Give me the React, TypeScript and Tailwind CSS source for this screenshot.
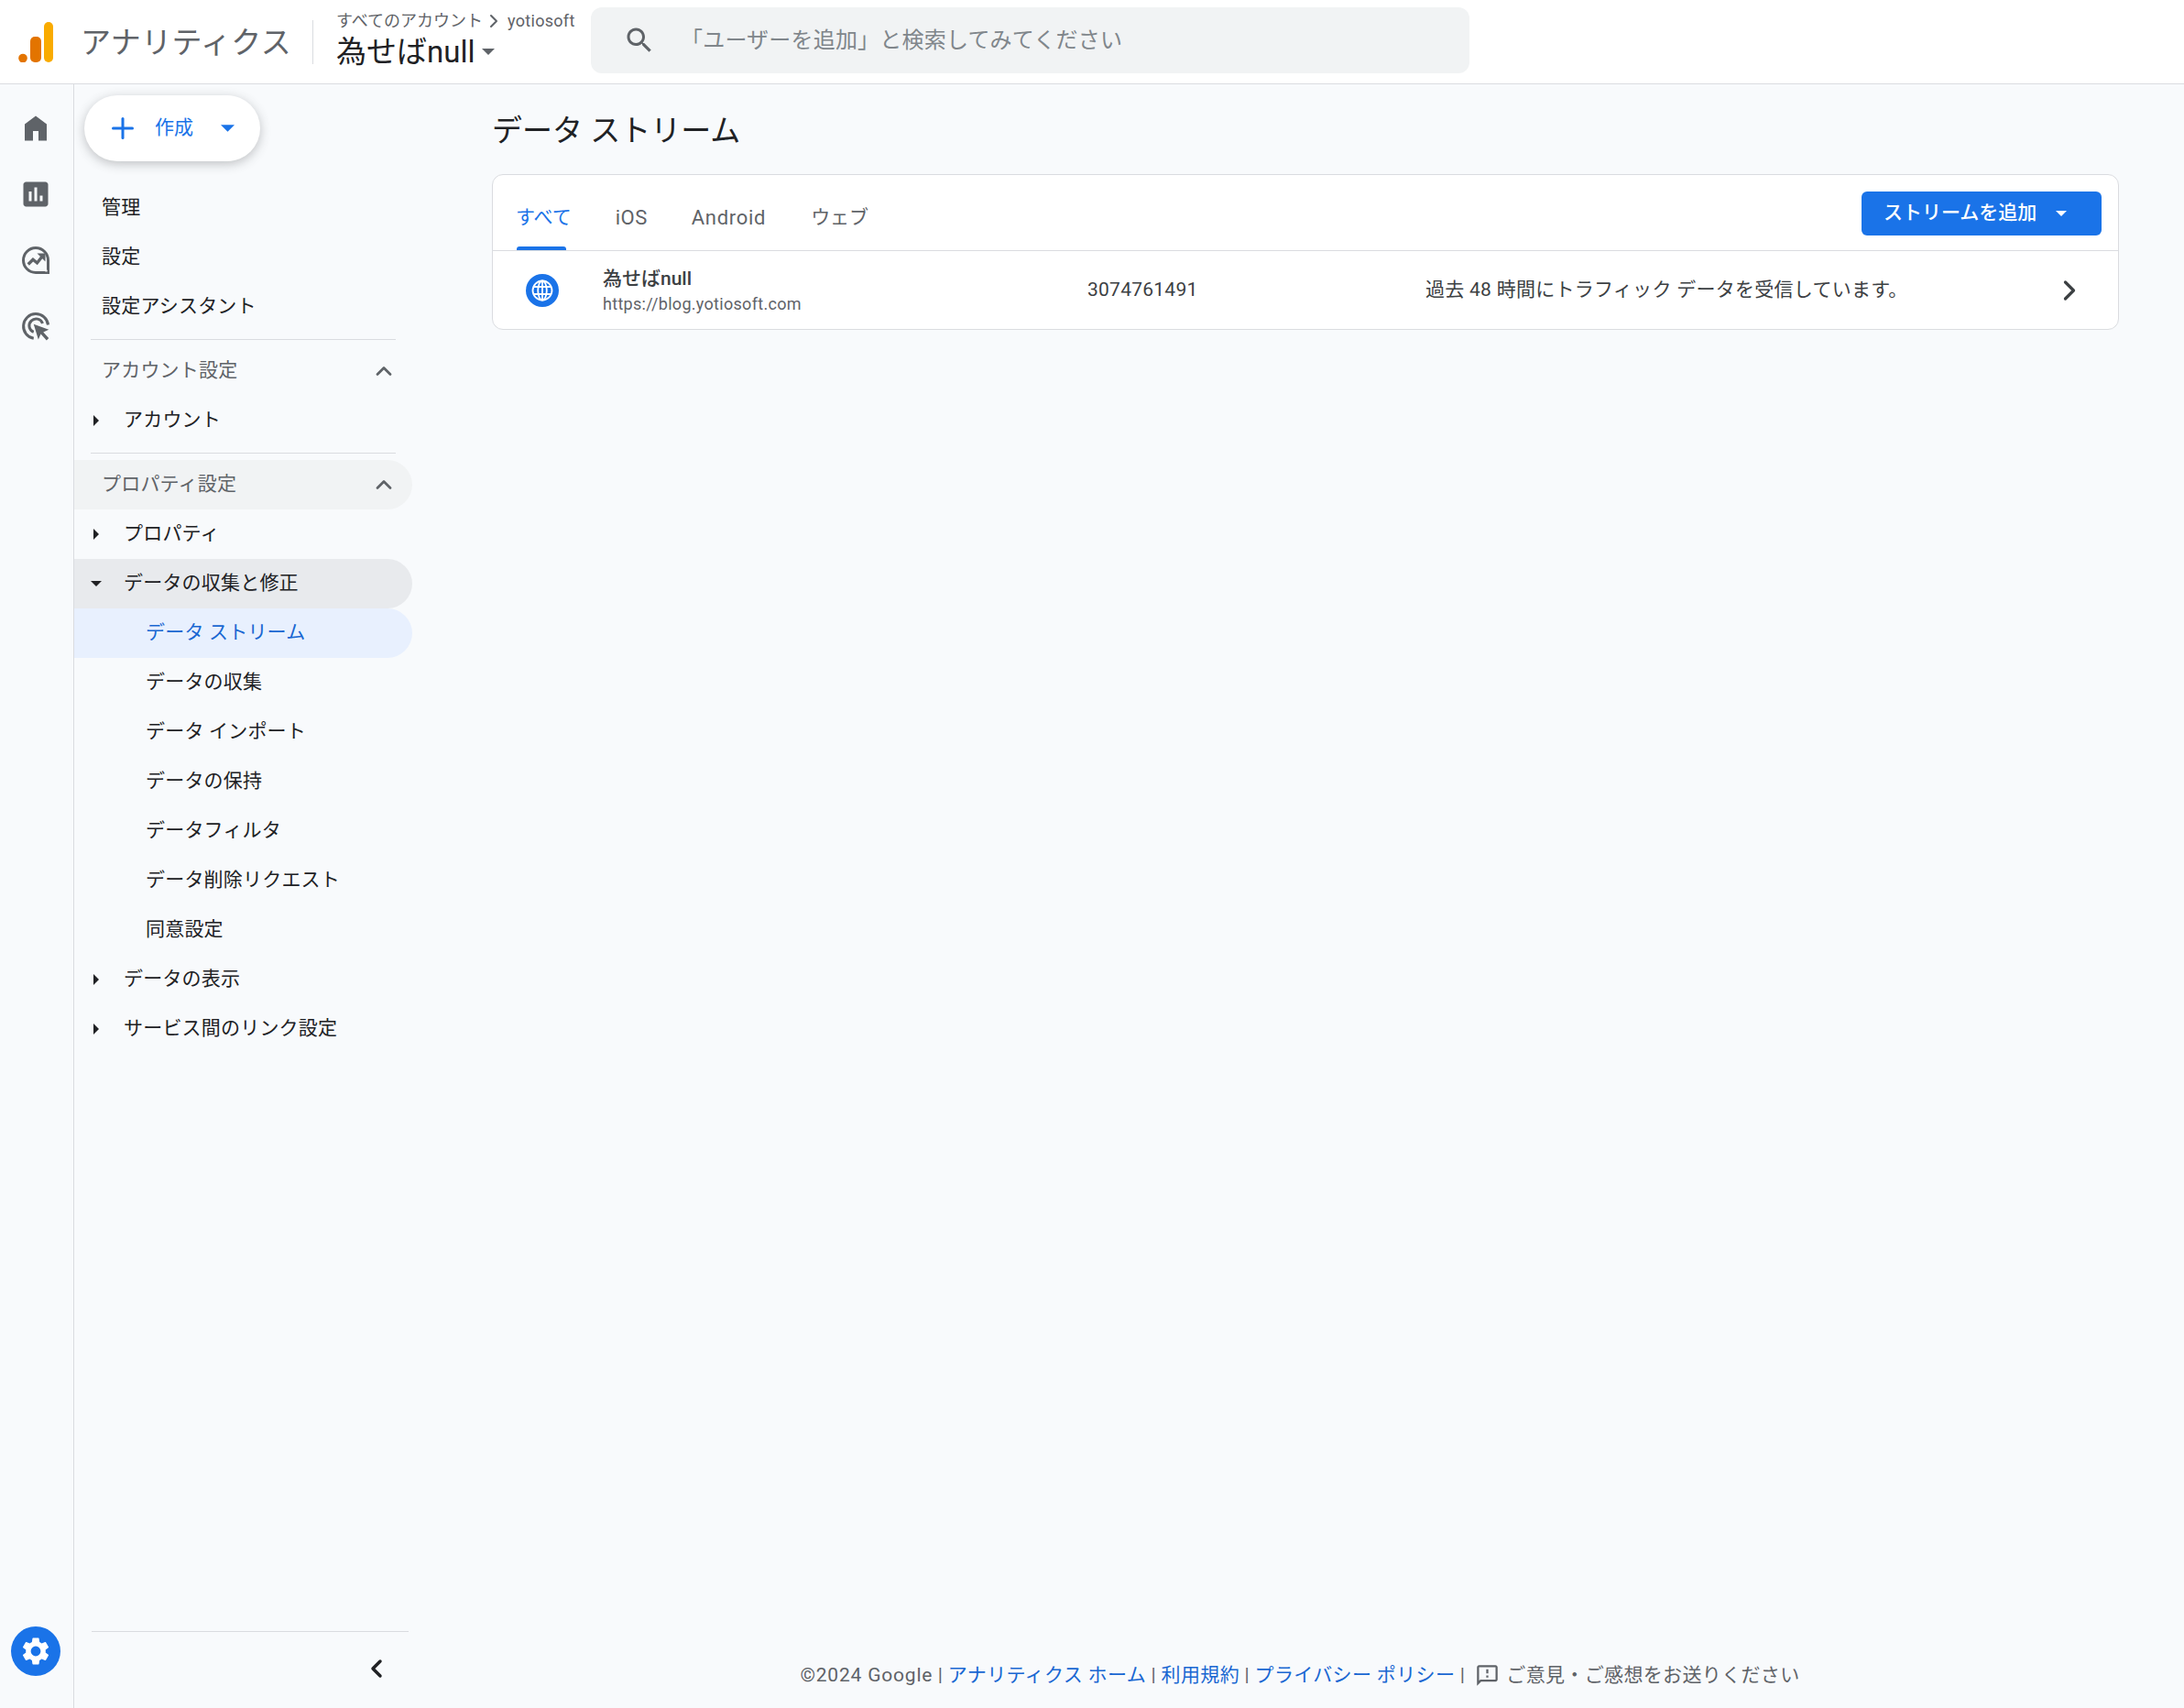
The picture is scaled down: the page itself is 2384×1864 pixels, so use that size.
import React from 'react';
import { Plus, ChevronUp, ChevronLeft, ChevronRight } from 'lucide-react';

const Caret: React.FC<{ className: string }> = ({ className }) => (
  <svg viewBox="0 0 10 5" className={className} fill="currentColor">
    <path d="M0 0h10L5 5z" />
  </svg>
);

const Logo = () => (
  <svg viewBox="0 0 38 44" className="w-[38px] h-[44px]">
    <rect x="28" y="0" width="10" height="44" rx="5" fill="#f9ab00" />
    <rect x="13" y="16" width="12" height="28" rx="5" fill="#e37400" />
    <circle cx="5" cy="39.5" r="4.8" fill="#e37400" />
  </svg>
);

const SearchIcon = () => (
  <svg viewBox="0 0 24 24" className="w-9 h-9 ml-[35px]" fill="#5f6368">
    <path d="M15.5 14h-.79l-.28-.27C15.41 12.59 16 11.11 16 9.5 16 5.91 13.09 3 9.5 3S3 5.91 3 9.5 5.91 16 9.5 16c1.61 0 3.09-.59 4.23-1.57l.27.28v.79l5 4.99L20.49 19l-4.99-5zm-6 0C7.01 14 5 11.99 5 9.5S7.01 5 9.5 5 14 7.01 14 9.5 11.99 14 9.5 14z" />
  </svg>
);

const HomeIcon = () => (
  <svg viewBox="0 0 24 24" className="w-9 h-9" fill="#5f6368">
    <path d="M4 21V9l8-6 8 6v12h-6v-7h-4v7H4z" />
  </svg>
);

const ReportsIcon = () => (
  <svg viewBox="0 0 24 24" className="w-9 h-9" fill="#5f6368">
    <path d="M19 3H5c-1.1 0-2 .9-2 2v14c0 1.1.9 2 2 2h14c1.1 0 2-.9 2-2V5c0-1.1-.9-2-2-2zM9 17H7v-7h2v7zm4 0h-2V7h2v10zm4 0h-2v-4h2v4z" />
  </svg>
);

const ExploreIcon = () => (
  <svg viewBox="0 0 24 24" className="w-9 h-9" fill="none" stroke="#5f6368">
    <path d="M21 12a9 9 0 1 0-9 9h9z" strokeWidth="2" />
    <path d="M6.5 15l3.5-3.5 3 2.5 3.5-4.5" strokeWidth="2.2" />
    <path d="M13 7h6v6z" fill="#5f6368" strokeWidth="0" />
    <circle cx="19.6" cy="19.6" r="0.8" fill="#ffffff" strokeWidth="0" />
  </svg>
);

const AdvertisingIcon = () => (
  <svg viewBox="0 0 24 24" className="w-9 h-9" fill="none" stroke="#5f6368" strokeWidth="2">
    <path d="M10.5 20.9A9 9 0 1 1 21 11" />
    <path d="M10.5 16.3A5 5 0 1 1 17 10" />
    <path d="M10.5 10.5l11 4-4 1.8 4 4.4-1.6 1.6-4.2-4.6-1.8 4z" fill="#5f6368" stroke="none" />
  </svg>
);

const GearIcon = () => (
  <svg viewBox="0 0 24 24" className="w-[36px] h-[36px]" fill="#ffffff">
    <path d="M19.14 12.94c.04-.3.06-.61.06-.94 0-.32-.02-.64-.07-.94l2.03-1.58a.49.49 0 0 0 .12-.61l-1.92-3.32a.49.49 0 0 0-.59-.22l-2.39.96c-.5-.38-1.03-.7-1.62-.94l-.36-2.54a.48.48 0 0 0-.48-.41h-3.84a.48.48 0 0 0-.47.41l-.36 2.54c-.59.24-1.13.57-1.62.94l-2.39-.96a.48.48 0 0 0-.59.22L2.74 8.87a.47.47 0 0 0 .12.61l2.03 1.58c-.05.3-.09.63-.09.94s.02.64.07.94l-2.03 1.58a.49.49 0 0 0-.12.61l1.92 3.32c.12.22.37.29.59.22l2.39-.96c.5.38 1.03.7 1.62.94l.36 2.54c.05.24.24.41.48.41h3.84c.24 0 .44-.17.47-.41l.36-2.54c.59-.24 1.13-.56 1.62-.94l2.39.96c.22.08.47 0 .59-.22l1.92-3.32a.47.47 0 0 0-.12-.61l-2.01-1.58zM12 15.6A3.6 3.6 0 1 1 12 8.4a3.6 3.6 0 0 1 0 7.2z" />
  </svg>
);

const GlobeIcon = () => (
  <svg viewBox="0 0 36 36" className="w-9 h-9">
    <circle cx="18" cy="18" r="18" fill="#1a73e8" />
    <g fill="none" stroke="#ffffff" strokeWidth="1.8">
      <circle cx="18" cy="18" r="10.5" />
      <ellipse cx="18" cy="18" rx="4.8" ry="10.5" />
      <path d="M18 7.5v21M8.5 14h19M8.5 22h19" />
    </g>
  </svg>
);

const FeedbackIcon = () => (
  <svg viewBox="0 0 24 24" className="w-[27px] h-[27px]" fill="#5f6368">
    <path d="M20 2H4c-1.1 0-2 .9-2 2v18l4-4h14c1.1 0 2-.9 2-2V4c0-1.1-.9-2-2-2zm0 14H5.17L4 17.17V4h16v12zM11 12h2v2h-2zm0-6h2v4h-2z" />
  </svg>
);

const NavItem: React.FC<{ label: string; active?: boolean }> = ({ label, active }) => (
  <div
    className={`h-[54px] flex items-center pl-[78px] rounded-r-full text-[21px] tracking-[0.2px] ${
      active ? 'bg-[#e8f0fe] text-[#1967d2]' : 'text-[#202124]'
    }`}
  >
    {label}
  </div>
);

const TreeItem: React.FC<{ label: string; open?: boolean }> = ({ label, open }) => (
  <div className={`h-[54px] flex items-center rounded-r-full text-[21px] tracking-[0.2px] text-[#202124] ${open ? 'bg-[#e8eaed]' : ''}`}>
    <span className="w-[54px] pl-[18px] flex">
      {open ? (
        <Caret className="w-[12px] h-[6px] text-[#202124]" />
      ) : (
        <Caret className="w-[12px] h-[6px] -rotate-90 text-[#202124]" />
      )}
    </span>
    {label}
  </div>
);

const SectionHead: React.FC<{ label: string; hover?: boolean }> = ({ label, hover }) => (
  <div
    className={`h-[54px] flex items-center justify-between pl-[30px] pr-[17px] rounded-r-full text-[21px] tracking-[0.2px] text-[#5f6368] ${
      hover ? 'bg-[#f1f3f4]' : ''
    }`}
  >
    {label}
    <ChevronUp size={28} strokeWidth={2.4} color="#5f6368" />
  </div>
);

const COLLECTION_ITEMS = ['データの収集', 'データ インポート', 'データの保持', 'データフィルタ', 'データ削除リクエスト', '同意設定'];

export default function App() {
  return (
    <div className="w-[2384px] h-[1864px] overflow-hidden flex flex-col bg-[#f8fafc] font-['Roboto','Noto_Sans_CJK_JP',sans-serif]">
      {/* Top bar */}
      <header className="h-[92px] shrink-0 bg-white border-b border-[#dadce0] flex items-center">
        <div className="w-[68px] ml-[20px] shrink-0">
          <Logo />
        </div>
        <span className="w-[253px] shrink-0 pt-[2px] text-[33px] tracking-[0.4px] text-[#5f6368] leading-none">アナリティクス</span>
        <div className="w-px h-[48px] bg-[#dadce0] shrink-0" />
        <div className="ml-[25px] w-[278px] shrink-0 flex flex-col pb-[4px]">
          <div className="mb-[2px] flex items-center text-[18px] leading-[24px] text-[#5f6368]">
            すべてのアカウント
            <ChevronRight size={24} strokeWidth={2} className="mr-[3px]" />
            <span className="tracking-[0.3px]">yotiosoft</span>
          </div>
          <div className="flex items-center text-[33px] leading-[40px] text-[#202124]">
            為せばnull
            <Caret className="ml-[8px] w-[14px] h-[7px] text-[#5f6368]" />
          </div>
        </div>
        <div className="w-[959px] h-[72px] -mt-[4px] bg-[#f1f3f4] rounded-[12px] flex items-center shrink-0">
          <SearchIcon />
          <span className="ml-[27px] text-[24px] tracking-[0.2px] text-[#80868b]">「ユーザーを追加」と検索してみてください</span>
        </div>
      </header>

      <div className="flex-1 flex min-h-0">
        {/* Icon rail */}
        <nav className="w-[81px] shrink-0 border-r border-[#dadce0] flex flex-col items-center pt-[30px] pr-[2px]">
          <div className="flex flex-col items-center gap-[36px]">
            <HomeIcon />
            <ReportsIcon />
            <ExploreIcon />
            <AdvertisingIcon />
          </div>
          <div className="mt-auto mb-[35px] w-[54px] h-[54px] rounded-full bg-[#1a73e8] flex items-center justify-center">
            <GearIcon />
          </div>
        </nav>

        {/* Settings side menu */}
        <aside className="w-[369px] shrink-0 flex flex-col relative">
          <button className="ml-[11px] mt-[12px] w-[192px] h-[72px] rounded-full bg-white shadow-[0_3px_12px_rgba(60,64,67,0.3)] flex items-center text-[21px] text-[#1a73e8] shrink-0">
            <Plus size={36} strokeWidth={2} className="ml-[24px]" />
            <span className="ml-[17px]">作成</span>
            <Caret className="ml-[30px] w-[15px] h-[8px]" />
          </button>

          <div className="mt-[24px] text-[21px] tracking-[0.2px] text-[#202124] pl-[30px] flex flex-col">
            <div className="h-[54px] flex items-center">管理</div>
            <div className="h-[54px] flex items-center">設定</div>
            <div className="h-[54px] flex items-center">設定アシスタント</div>
          </div>

          <div className="mt-[8px] mx-[18px] h-px bg-[#dadce0]" />
          <div className="mt-[7px]">
            <SectionHead label="アカウント設定" />
            <TreeItem label="アカウント" />
          </div>
          <div className="mt-[8px] mx-[18px] h-px bg-[#dadce0]" />
          <div className="mt-[7px]">
            <SectionHead label="プロパティ設定" hover />
            <TreeItem label="プロパティ" />
            <TreeItem label="データの収集と修正" open />
            <NavItem label="データ ストリーム" active />
            {COLLECTION_ITEMS.map((item) => (
              <NavItem key={item} label={item} />
            ))}
            <TreeItem label="データの表示" />
            <TreeItem label="サービス間のリンク設定" />
          </div>

          <div className="mt-auto ml-[19px] mr-[4px] border-t border-[#dadce0] h-[84px] flex items-center justify-end pr-[19px] pb-[4px]">
            <ChevronLeft size={32} strokeWidth={2.6} color="#202124" />
          </div>
        </aside>

        {/* Main content */}
        <main className="flex-1 min-w-0 flex flex-col pl-[87px] pr-[71px]">
          <h1 className="mt-[31px] h-[40px] leading-[40px] text-[33px] text-[#202124]">データ ストリーム</h1>

          <section className="mt-[27px] h-[170px] bg-white border border-[#dadce0] rounded-[12px] flex flex-col">
            <div className="h-[83px] flex items-stretch justify-between border-b border-[#dadce0] pl-[25px] pr-[18px]">
              <div className="flex gap-[48px] text-[21px] text-[#5f6368]">
                <div className="relative flex items-center pt-[12px] text-[#1a73e8]">
                  すべて
                  <span className="absolute bottom-0 left-[1px] right-[6px] h-[4px] bg-[#1a73e8] rounded-t-[3px]" />
                </div>
                <div className="flex items-center pt-[10px] text-[22px] tracking-[0.5px]">iOS</div>
                <div className="flex items-center pt-[10px] text-[22px] tracking-[0.7px]">Android</div>
                <div className="flex items-center pt-[12px] ml-[1px]">ウェブ</div>
              </div>
              <button className="mt-[18px] w-[262px] h-[48px] rounded-[6px] bg-[#1a73e8] text-white text-[21px] font-medium flex items-center pl-[24px]">
                ストリームを追加
                <Caret className="ml-[21px] w-[12px] h-[6px]" />
              </button>
            </div>
            <div className="flex-1 flex items-center text-[21px] text-[#3c4043]">
              <div className="w-[108px] flex justify-center shrink-0">
                <GlobeIcon />
              </div>
              <div className="ml-[12px] w-[529px] shrink-0 flex flex-col">
                <span className="leading-[28px] font-medium text-[#3c4043]">為せばnull</span>
                <span className="mt-[2px] leading-[24px] text-[18px] tracking-[0.3px] text-[#5f6368]">https://blog.yotiosoft.com</span>
              </div>
              <span className="w-[369px] shrink-0 pt-[1px] tracking-[0.25px]">3074761491</span>
              <span className="flex-1 pt-[1px] tracking-[0.27px]">過去 48 時間にトラフィック データを受信しています。</span>
              <ChevronRight size={36} strokeWidth={2.2} color="#3c4043" className="mr-[35px]" />
            </div>
          </section>

          <footer className="mt-auto mb-[20px] -ml-[87px] -mr-[71px] pl-[4px] flex items-center justify-center text-[21px] tracking-[0.35px] text-[#5f6368] whitespace-pre">
            <span className="tracking-[0.8px]">©2024 Google</span> | <span className="text-[#1967d2]">アナリティクス ホーム</span> | <span className="text-[#1967d2]">利用規約</span> | <span className="text-[#1967d2]">プライバシー ポリシー</span> |
            <span className="ml-[11px] mr-[7px] flex">
              <FeedbackIcon />
            </span>
            ご意見・ご感想をお送りください
          </footer>
        </main>
      </div>
    </div>
  );
}
